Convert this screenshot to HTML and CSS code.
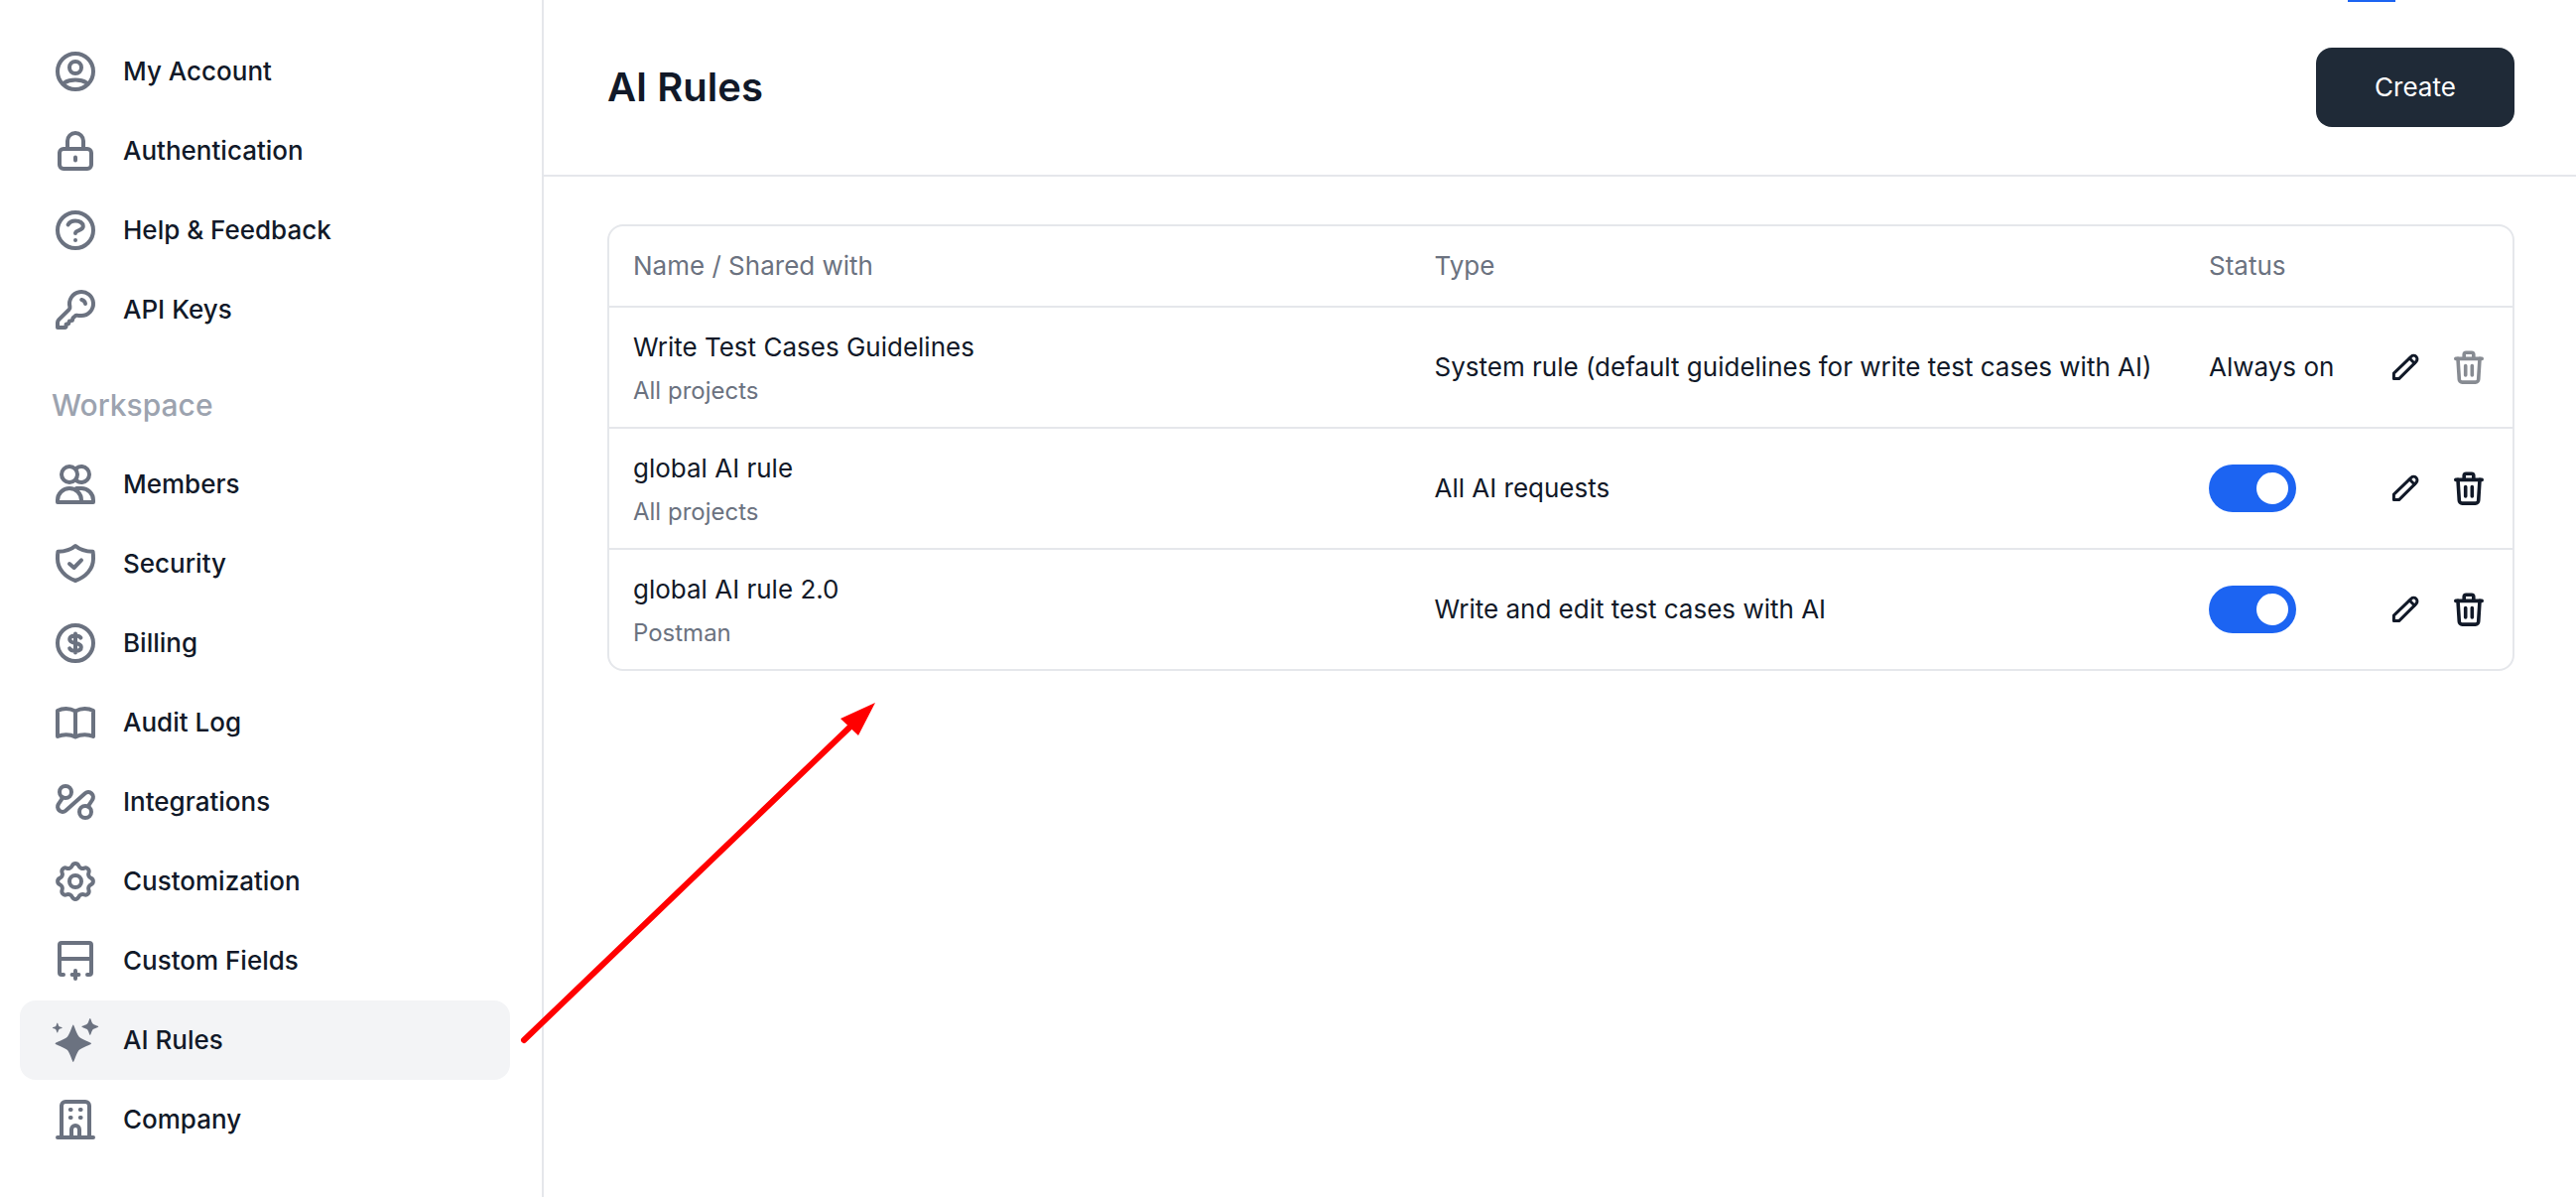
FILE: index.html
```html
<!DOCTYPE html>
<html lang="en">
    <head>
        <meta charset="UTF-8" />
        <meta name="viewport" content="width=device-width, initial-scale=1.0" />
        <title>AI Rules</title>
        <link rel="stylesheet" href="styles.css">
    </head>
    <body>
        <!-- Shared icons for the table rows -->
        <svg class="sprite" aria-hidden="true">
            <symbol id="pencil" viewBox="0 0 40 40">
                <path d="M8.4 31.6v-5.4L25.8 9.3a3.6 3.6 0 0 1 5.1 5.1L13.6 31.6Z" />
                <path d="M24.2 11l5 5" />
            </symbol>
            <symbol id="trash" viewBox="0 0 40 40" stroke-width="3.600">
                <path d="M6.8 11.4h26.4" />
                <path d="M15.2 11V7.200a2 2 0 0 1 2-2h5.600a2 2 0 0 1 2 2v3.800" />
                <path d="M9 11.4l1.300 20.800a3 3 0 0 0 3 2.900h13.400a3 3 0 0 0 3-2.900l1.300-20.800" />
                <path d="M16.700 18.500v9.500M23.300 18.500v9.500" />
            </symbol>
        </svg>

        <div class="layout">
            <nav class="sidebar">
                <a class="nav-item" href="#">
                    <svg viewBox="0 0 24 24"><circle cx="12" cy="12" r="9" /><circle cx="12" cy="10" r="3" /><path d="M6.2 17.8c1.6-1 3.6-1.5 5.8-1.5s4.2.5 5.8 1.5" /></svg>
                    My Account
                </a>
                <a class="nav-item" href="#">
                    <svg viewBox="0 0 24 24"><rect x="4" y="11" width="16" height="10" rx="2" /><path d="M8 11V7a4 4 0 0 1 8 0v4M12 15.3v1.4" /></svg>
                    Authentication
                </a>
                <a class="nav-item" href="#">
                    <svg viewBox="0 0 24 24"><circle cx="12" cy="12" r="9" /><path d="M8.3 9.2C8.9 8 10.3 7.2 12 7.2c2.2 0 3.9 1.2 3.9 2.8 0 2.300-3.900 1.700-3.900 3.500M12 17h.01" /></svg>
                    Help &amp; Feedback
                </a>
                <a class="nav-item" href="#">
                    <svg viewBox="0 0 24 24"><path d="M15 15a6 6 0 1 0-5.8-4.5c.1.5 0 1-.4 1.4L3.6 17.1a2 2 0 0 0-.6 1.4V21h3.6c.4 0 .7-.3.7-.7v-1l1.3-.3.4-1.3 1.4-.3.4-1.3 1-.9c.3-.3.8-.4 1.2-.3.6.1 1.3.1 2 .1ZM15.100 7a2.500 2.500 0 0 1 1.900 2" /></svg>
                    API Keys
                </a>

                <h2 class="nav-heading">Workspace</h2>

                <a class="nav-item" href="#">
                    <svg viewBox="0 0 24 24"><circle cx="9" cy="7" r="4" /><path d="M12.6 3.8A4 4 0 1 1 12.6 10.2M3 21v-1a6 6 0 0 1 12 0v1ZM12.5 14H15a6 6 0 0 1 6 6v1h-6" /></svg>
                    Members
                </a>
                <a class="nav-item" href="#">
                    <svg viewBox="0 0 24 24"><path d="M12 3C9.8 4.900 7 5.800 3.200 5.900 3 7 3 8.300 3 9.500c0 5.200 3.800 9.200 9 11 5.200-1.800 9-5.800 9-11 0-1.200 0-2.500-.2-3.600C17 5.800 14.200 4.900 12 3ZM9 12l2.300 2 3.700-3.800" /></svg>
                    Security
                </a>
                <a class="nav-item" href="#">
                    <svg viewBox="0 0 24 24"><circle cx="12" cy="12" r="9" /><path d="M14.7 9.3C14.2 8.5 13.2 8.2 12 8.2c-1.7 0-2.9.6-2.9 1.8s1.2 1.7 2.9 2 2.9.8 2.9 2-1.2 1.9-2.9 1.9c-1.4 0-2.5-.4-2.9-1.200M12 7.200v9.600" /></svg>
                    Billing
                </a>
                <a class="nav-item" href="#">
                    <svg viewBox="0 0 24 24"><path d="M12 6.200C10.500 5.400 8.900 5 7.300 5 5.700 5 4.300 5.300 3 6v13c1.300-.6 2.700-.9 4.300-.9 1.600 0 3.200.3 4.700 1.100 1.500-.8 3.100-1.100 4.700-1.100 1.600 0 3 .3 4.300.9V6c-1.300-.7-2.700-1-4.300-1-1.600 0-3.200.4-4.700 1.200ZM12 6.200v13" /></svg>
                    Audit Log
                </a>
                <a class="nav-item" href="#">
                    <svg viewBox="0 0 24 24"><circle cx="7" cy="7" r="3" /><circle cx="17" cy="17" r="3" /><path d="M5.7 9.7L3.5 13a2.500 2.500 0 0 0 3.600 3.400l9.800-8.800a2.500 2.500 0 0 1 3.600 3.400l-2.200 3.300" /></svg>
                    Integrations
                </a>
                <a class="nav-item" href="#">
                    <svg viewBox="0 0 24 24"><circle cx="12" cy="12" r="3" /><path d="M10.42 4.06A1.75 1.75 0 0 1 13.58 4.06A2.2 2.2 0 0 0 16.5 5.27A1.75 1.75 0 0 1 18.73 7.5A2.2 2.2 0 0 0 19.94 10.42A1.75 1.75 0 0 1 19.94 13.58A2.2 2.2 0 0 0 18.73 16.5A1.75 1.75 0 0 1 16.5 18.73A2.2 2.2 0 0 0 13.58 19.94A1.75 1.75 0 0 1 10.42 19.94A2.2 2.2 0 0 0 7.5 18.73A1.75 1.75 0 0 1 5.27 16.5A2.2 2.2 0 0 0 4.06 13.58A1.75 1.75 0 0 1 4.06 10.42A2.2 2.2 0 0 0 5.27 7.5A1.75 1.75 0 0 1 7.5 5.27A2.2 2.2 0 0 0 10.42 4.06Z" /></svg>
                    Customization
                </a>
                <a class="nav-item" href="#">
                    <svg viewBox="0 0 24 24"><path d="M6 19H5a1 1 0 0 1-1-1V4a1 1 0 0 1 1-1h14a1 1 0 0 1 1 1v14a1 1 0 0 1-1 1h-1M4 11h16M10.3 19h3.4M12 17v4" /></svg>
                    Custom Fields
                </a>
                <a class="nav-item active" href="#">
                    <svg class="solid" viewBox="0 0 24 24"><path d="M10.9 4.3C11.3 4.3 12.2 8 13.8 10.3C15.5 12 20 13.1 20 13.7C20 14.3 15.5 15.4 13.8 17C12.2 19.3 11.3 23 10.9 23C10.5 23 9.6 19.3 8 17C6.3 15.4 1.8 14.3 1.8 13.7C1.8 13.1 6.3 12 8 10.3C9.6 8 10.5 4.3 10.9 4.3Z" /><path d="M19.4 1C19.8 1 20 2.9 20.8 3.8C21.6 4.5 23.6 4.8 23.6 5.2C23.6 5.6 21.6 5.9 20.8 6.6C20 7.5 19.8 9.4 19.4 9.4C19 9.4 18.8 7.5 18 6.6C17.2 5.9 15.2 5.6 15.2 5.2C15.2 4.8 17.2 4.5 18 3.8C18.8 2.9 19 1 19.4 1Z" /><path d="M2.9 3.3C3.2 3.3 3.3 4.5 3.7 5C4.2 5.4 5.4 5.5 5.4 5.8C5.4 6.1 4.2 6.2 3.7 6.6C3.3 7.1 3.2 8.3 2.9 8.3C2.6 8.3 2.5 7.1 2.1 6.6C1.6 6.2.4 6.1.4 5.8C.4 5.5 1.6 5.4 2.1 5C2.5 4.5 2.6 3.3 2.9 3.3Z" /></svg>
                    AI Rules
                </a>
                <a class="nav-item" href="#">
                    <svg viewBox="0 0 24 24"><path d="M5 21V5a2 2 0 0 1 2-2h10a2 2 0 0 1 2 2v16M3 21h18M10 21v-4a2 2 0 0 1 4 0v4M9.4 7h.4M14.4 7h.4M9.4 11h.4M14.4 11h.4" /></svg>
                    Company
                </a>
            </nav>

            <main class="main">
                <span class="tab-marker"></span>
                <header class="page-header">
                    <h1>AI Rules</h1>
                    <button class="create" type="button">Create</button>
                </header>

                <div class="content">
                    <div class="card">
                        <table>
                            <thead>
                                <tr>
                                    <th class="col-name">Name / Shared with</th>
                                    <th>Type</th>
                                    <th class="col-status">Status</th>
                                    <th class="col-actions"></th>
                                </tr>
                            </thead>
                            <tbody>
                                <tr>
                                    <td>
                                        <div class="rule-name">Write Test Cases Guidelines</div>
                                        <div class="rule-scope">All projects</div>
                                    </td>
                                    <td>System rule (default guidelines for write test cases with AI)</td>
                                    <td>Always on</td>
                                    <td>
                                        <div class="actions">
                                            <button type="button" aria-label="Edit"><svg><use href="#pencil" /></svg></button>
                                            <button type="button" aria-label="Delete" disabled><svg><use href="#trash" /></svg></button>
                                        </div>
                                    </td>
                                </tr>
                                <tr>
                                    <td>
                                        <div class="rule-name">global AI rule</div>
                                        <div class="rule-scope">All projects</div>
                                    </td>
                                    <td>All AI requests</td>
                                    <td><input class="toggle" type="checkbox" aria-label="Enable global AI rule" checked /></td>
                                    <td>
                                        <div class="actions">
                                            <button type="button" aria-label="Edit"><svg><use href="#pencil" /></svg></button>
                                            <button type="button" aria-label="Delete"><svg><use href="#trash" /></svg></button>
                                        </div>
                                    </td>
                                </tr>
                                <tr>
                                    <td>
                                        <div class="rule-name">global AI rule 2.0</div>
                                        <div class="rule-scope">Postman</div>
                                    </td>
                                    <td>Write and edit test cases with AI</td>
                                    <td><input class="toggle" type="checkbox" aria-label="Enable global AI rule 2.0" checked /></td>
                                    <td>
                                        <div class="actions">
                                            <button type="button" aria-label="Edit"><svg><use href="#pencil" /></svg></button>
                                            <button type="button" aria-label="Delete"><svg><use href="#trash" /></svg></button>
                                        </div>
                                    </td>
                                </tr>
                            </tbody>
                        </table>
                    </div>
                </div>
            </main>

            <!-- Arrow from the menu item to the table -->
            <svg class="arrow" viewBox="0 0 360 348" aria-hidden="true">
                <path class="arrow-line" d="M6 342L334 27" />
                <path class="arrow-head" d="M360 2L325 18L343 35Z" />
            </svg>
        </div>
    </body>
</html>
```

FILE: styles.css
```css
/* Reset */
* {
    box-sizing: border-box;
    margin: 0;
    padding: 0;
}

body {
    font-family: "Inter", sans-serif;
    font-size: 26px;
    line-height: 40px;
    background-color: #fff;
    color: #111928;
}

svg {
    fill: none;
    stroke: currentColor;
    stroke-linecap: round;
    stroke-linejoin: round;
}

button {
    font: inherit;
    border: none;
    cursor: pointer;
}

.sprite {
    position: absolute;
    width: 0;
    height: 0;
}

.layout {
    position: relative;
    display: flex;
    min-height: 100vh;
}

/* Sidebar */
.sidebar {
    flex: 0 0 548px;
    padding: 32px 32px 32px 20px;
    border-right: 2px solid #e5e7eb;
}

.nav-item {
    display: flex;
    align-items: center;
    gap: 24px;
    height: 80px;
    padding: 0 32px;
    border-radius: 16px;
    color: #111928;
    font-weight: 500;
    text-decoration: none;
}

.nav-item svg {
    width: 48px;
    height: 48px;
    color: #6b7280;
    stroke-width: 2;
}

.nav-item svg.solid {
    fill: currentColor;
    stroke: none;
}

.nav-item.active,
.nav-item:hover {
    background-color: #f3f4f6;
}

.nav-heading {
    padding: 36px 32px 20px;
    font-size: 30px;
    font-weight: 500;
    color: #9ca3af;
}

/* Main area */
.main {
    position: relative;
    flex: 1;
    min-width: 0;
}

.tab-marker {
    position: absolute;
    top: 0;
    right: 182px;
    width: 48px;
    height: 2px;
    background-color: #1c64f2;
}

.page-header {
    display: flex;
    justify-content: space-between;
    align-items: center;
    padding: 48px 62px 48px 64px;
    border-bottom: 2px solid #e5e7eb;
}

h1 {
    font-size: 40px;
    font-weight: 600;
}

.create {
    width: 200px;
    height: 80px;
    border-radius: 16px;
    background-color: #1f2a37;
    color: #fff;
}

.content {
    padding: 48px 62px 48px 64px;
}

/* Rules table */
.card {
    border: 2px solid #e5e7eb;
    border-radius: 16px;
}

table {
    width: 100%;
    table-layout: fixed;
    border-collapse: separate;
    border-spacing: 0;
}

th,
td {
    padding: 20px 24px;
    text-align: left;
    vertical-align: middle;
    white-space: nowrap;
}

th {
    font-weight: 400;
    color: #6b7280;
}

td {
    border-top: 2px solid #e5e7eb;
}

.col-name {
    width: 42.1%;
}

.col-status {
    width: 178px;
}

.col-actions {
    width: 152px;
}

.rule-scope {
    margin-top: 8px;
    font-size: 24px;
    line-height: 32px;
    color: #6b7280;
}

.actions {
    display: flex;
    gap: 24px;
}

.actions button {
    width: 40px;
    height: 40px;
    background: none;
    color: #111928;
}

.actions button:disabled {
    opacity: 0.5;
    cursor: default;
}

.actions svg {
    display: block;
    width: 40px;
    height: 40px;
    stroke-width: 3;
}

.toggle {
    appearance: none;
    display: flex;
    align-items: center;
    width: 88px;
    height: 48px;
    padding: 8px;
    border-radius: 24px;
    background-color: #d1d5db;
    cursor: pointer;
}

.toggle::before {
    content: "";
    width: 32px;
    height: 32px;
    border-radius: 50%;
    background-color: #fff;
}

.toggle:checked {
    justify-content: flex-end;
    background-color: #1c64f2;
}

/* Arrow */
.arrow {
    position: absolute;
    left: 522px;
    top: 706px;
    width: 360px;
    height: 348px;
}

.arrow-line {
    stroke: #f00;
    stroke-width: 6;
}

.arrow-head {
    fill: #f00;
    stroke: none;
}
```
